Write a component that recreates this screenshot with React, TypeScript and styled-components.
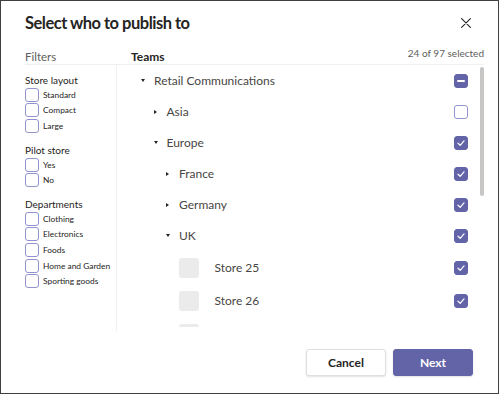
import React from "react";
import styled, { createGlobalStyle } from "styled-components";

const GlobalStyle = createGlobalStyle`
    html, body {
        margin: 0;
        padding: 0;
        background: #ffffff;
    }
    body {
        font-family: Lato, "Open Sans", sans-serif;
        color: #252423;
    }
`;

type CheckState = "on" | "off" | "mixed";

type TreeItem = {
    label: string;
    depth: number;
    caret?: "down" | "right";
    store?: boolean;
    check: CheckState;
};

const filterGroups = [
    { title: "Store layout", options: ["Standard", "Compact", "Large"] },
    { title: "Pilot store", options: ["Yes", "No"] },
    {
        title: "Departments",
        options: ["Clothing", "Electronics", "Foods", "Home and Garden", "Sporting goods"],
    },
];

const treeItems: TreeItem[] = [
    { label: "Retail Communications", depth: 0, caret: "down", check: "mixed" },
    { label: "Asia", depth: 1, caret: "right", check: "off" },
    { label: "Europe", depth: 1, caret: "down", check: "on" },
    { label: "France", depth: 2, caret: "right", check: "on" },
    { label: "Germany", depth: 2, caret: "right", check: "on" },
    { label: "UK", depth: 2, caret: "down", check: "on" },
    { label: "Store 25", depth: 3, store: true, check: "on" },
    { label: "Store 26", depth: 3, store: true, check: "on" },
    { label: "Store 27", depth: 3, store: true, check: "on" },
];

const TreeCheck = ({ state }: { state: CheckState }) => (
    <CheckBox $state={state}>
        {state === "on" && (
            <svg width="10" height="10" viewBox="0 0 10 10">
                <polyline
                    points="2,5.2 4.2,7.3 8,2.8"
                    fill="none"
                    stroke="#ffffff"
                    strokeWidth="1.2"
                    strokeLinecap="round"
                    strokeLinejoin="round"
                />
            </svg>
        )}
        {state === "mixed" && <MixedBar />}
    </CheckBox>
);

const App = () => {
    return (
        <>
            <GlobalStyle />
            <Dialog>
                <Header>
                    <Title>Select who to publish to</Title>
                    <CloseButton aria-label="Close">
                        <svg width="10" height="10" viewBox="0 0 10 10">
                            <path
                                d="M0.6 0.6 L9.4 9.4 M9.4 0.6 L0.6 9.4"
                                stroke="#252423"
                                strokeWidth="1.1"
                                strokeLinecap="round"
                            />
                        </svg>
                    </CloseButton>
                </Header>

                <Body>
                    <FiltersHead>Filters</FiltersHead>
                    <TeamsHead>
                        <TeamsTitle>Teams</TeamsTitle>
                        <Count>24 of 97 selected</Count>
                    </TeamsHead>

                    <FilterPane>
                        {filterGroups.map((group) => (
                            <FilterGroup key={group.title}>
                                <GroupTitle>{group.title}</GroupTitle>
                                {group.options.map((opt) => (
                                    <FilterOption key={opt}>
                                        <FilterBox />
                                        <OptionLabel>{opt}</OptionLabel>
                                    </FilterOption>
                                ))}
                            </FilterGroup>
                        ))}
                    </FilterPane>

                    <TreePane>
                        <TreeList>
                            {treeItems.map((item) => (
                                <TreeRow key={item.label} $depth={item.depth} $store={!!item.store}>
                                    {item.store ? (
                                        <Avatar />
                                    ) : (
                                        <CaretSlot>
                                            <Caret $dir={item.caret || "right"} />
                                        </CaretSlot>
                                    )}
                                    <RowLabel>{item.label}</RowLabel>
                                    <TreeCheck state={item.check} />
                                </TreeRow>
                            ))}
                        </TreeList>
                        <ScrollTrack>
                            <ScrollThumb />
                        </ScrollTrack>
                    </TreePane>
                </Body>

                <Footer>
                    <Button>Cancel</Button>
                    <Button $primary>Next</Button>
                </Footer>
            </Dialog>
        </>
    );
};

const Dialog = styled.div`
    width: 499px;
    height: 394px;
    box-sizing: border-box;
    border: 1px solid #3f3f3f;
    display: flex;
    flex-direction: column;
    padding-left: 24px;
    background: #ffffff;
`;

const Header = styled.div`
    height: 43px;
    display: flex;
    align-items: center;
    justify-content: space-between;
    padding-right: 27px;
`;

const Title = styled.h1`
    margin: 0;
    font-size: 16.5px;
    font-weight: 700;
    letter-spacing: -0.5px;
    color: #252423;
`;

const CloseButton = styled.button`
    border: none;
    background: none;
    padding: 0;
    width: 10px;
    height: 10px;
    display: flex;
    cursor: pointer;
`;

const Body = styled.div`
    display: grid;
    grid-template-columns: 92px 1fr;
    grid-template-rows: 21px 267px;
    padding-right: 14px;
`;

const FiltersHead = styled.div`
    display: flex;
    align-items: flex-end;
    font-size: 11.5px;
    color: #605e5c;
    line-height: 15px;
    border-bottom: 1px solid #f0f0f0;
`;

const TeamsHead = styled.div`
    display: flex;
    align-items: flex-end;
    justify-content: space-between;
    padding-left: 14px;
    border-bottom: 1px solid #f0f0f0;
`;

const TeamsTitle = styled.div`
    font-size: 12px;
    font-weight: 700;
    color: #252423;
    line-height: 15px;
`;

const Count = styled.div`
    font-size: 10px;
    color: #605e5c;
    line-height: 13px;
    padding-bottom: 4px;
`;

const FilterPane = styled.div`
    border-right: 1px solid #f0f0f0;
    padding-top: 8px;
    display: flex;
    flex-direction: column;
    gap: 9px;
`;

const FilterGroup = styled.div`
    display: flex;
    flex-direction: column;
`;

const GroupTitle = styled.div`
    font-size: 10px;
    line-height: 14px;
    color: #252423;
`;

const FilterOption = styled.div`
    height: 15.6px;
    display: flex;
    align-items: center;
    gap: 4px;
`;

const FilterBox = styled.span`
    width: 14px;
    height: 14px;
    box-sizing: border-box;
    border: 1px solid #9293cf;
    border-radius: 3px;
    flex-shrink: 0;
`;

const OptionLabel = styled.span`
    font-size: 8.4px;
    color: #252423;
    white-space: nowrap;
`;

const TreePane = styled.div`
    display: flex;
    padding-bottom: 5px;
    min-height: 0;
`;

const TreeList = styled.div`
    flex: 1;
    height: 262px;
    overflow: hidden;
`;

const ScrollTrack = styled.div`
    width: 4px;
    padding-top: 2px;
`;

const ScrollThumb = styled.div`
    height: 129px;
    border-radius: 2px;
    background: #c8c6c4;
`;

const TreeRow = styled.div<{ $depth: number; $store: boolean }>`
    height: ${({ $store }) => ($store ? "33px" : "31px")};
    display: flex;
    align-items: center;
    padding-left: ${({ $depth }) => 24 + $depth * 12.5}px;
    padding-right: 12px;
`;

const CaretSlot = styled.span`
    width: 13px;
    display: flex;
    align-items: center;
    flex-shrink: 0;
`;

const Caret = styled.span<{ $dir: "down" | "right" }>`
    width: 0;
    height: 0;
    ${({ $dir }) =>
        $dir === "down"
            ? `border-left: 2.6px solid transparent;
               border-right: 2.6px solid transparent;
               border-top: 3.2px solid #252423;`
            : `border-top: 2.6px solid transparent;
               border-bottom: 2.6px solid transparent;
               border-left: 3.2px solid #252423;`}
`;

const Avatar = styled.span`
    width: 20px;
    height: 20px;
    border-radius: 3px;
    background: #ebebeb;
    margin-right: 16px;
    flex-shrink: 0;
`;

const RowLabel = styled.span`
    flex: 1;
    font-size: 12px;
    color: #484644;
    white-space: nowrap;
`;

const CheckBox = styled.span<{ $state: CheckState }>`
    width: 14px;
    height: 14px;
    box-sizing: border-box;
    border-radius: 3px;
    display: flex;
    align-items: center;
    justify-content: center;
    flex-shrink: 0;
    background: ${({ $state }) => ($state === "off" ? "#ffffff" : "#6264a7")};
    border: 1px solid ${({ $state }) => ($state === "off" ? "#9293cf" : "#6264a7")};
`;

const MixedBar = styled.span`
    width: 8px;
    height: 2px;
    border-radius: 1px;
    background: #ffffff;
`;

const Footer = styled.div`
    flex: 1;
    display: flex;
    justify-content: flex-end;
    align-items: flex-start;
    gap: 7px;
    padding: 17px 25px 0 0;
`;

const Button = styled.button<{ $primary?: boolean }>`
    width: 80px;
    height: 27px;
    border-radius: 3px;
    font-family: inherit;
    font-size: 12px;
    font-weight: 700;
    color: ${({ $primary }) => ($primary ? "#ffffff" : "#252423")};
    background: ${({ $primary }) => ($primary ? "#6264a7" : "#ffffff")};
    border: 1px solid ${({ $primary }) => ($primary ? "#6264a7" : "#e1dfdd")};
    box-shadow: 0 1px 2px rgba(0, 0, 0, 0.12);
    cursor: pointer;
`;

export default App;
